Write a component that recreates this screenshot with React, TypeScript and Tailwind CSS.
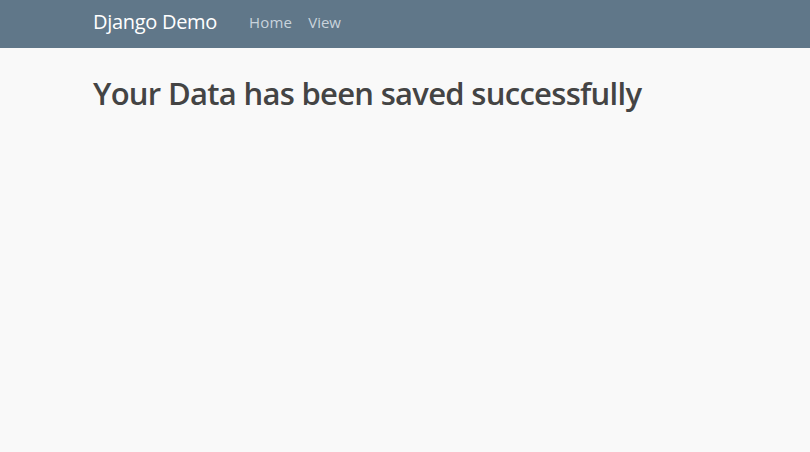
import React from 'react';

const App: React.FC = () => {
  return (
    <div className="min-h-[452px] bg-[#f9f9f9] font-['Open_Sans',sans-serif]">
      <nav className="h-12 bg-[#607789] flex items-center pl-[93px] pb-[4px]">
        <span className="text-white text-[20px] tracking-[-0.3px]">Django Demo</span>
        <div className="flex gap-4 ml-8 text-[15px] text-[#c9d3dc]">
          <span className="tracking-[0.2px]">Home</span>
          <span>View</span>
        </div>
      </nav>
      <h1 className="pl-[93px] pt-[23px] text-[31px] font-semibold text-[#444444] tracking-[-0.7px] leading-[44px]">
        Your Data has been saved successfully
      </h1>
    </div>
  );
};

export default App;
